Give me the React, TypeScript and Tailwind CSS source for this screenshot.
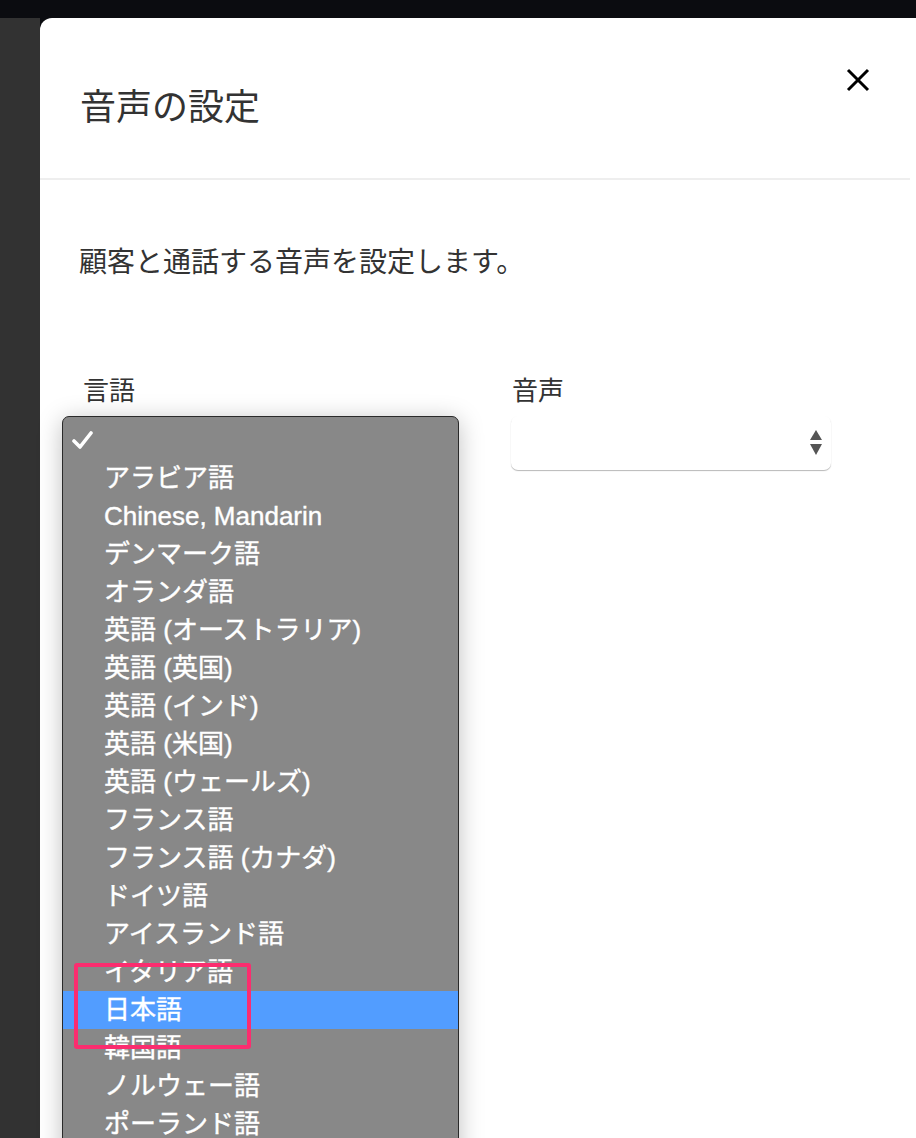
import React from "react";

const items = [
  "アラビア語",
  "Chinese, Mandarin",
  "デンマーク語",
  "オランダ語",
  "英語 (オーストラリア)",
  "英語 (英国)",
  "英語 (インド)",
  "英語 (米国)",
  "英語 (ウェールズ)",
  "フランス語",
  "フランス語 (カナダ)",
  "ドイツ語",
  "アイスランド語",
  "イタリア語",
  "日本語",
  "韓国語",
  "ノルウェー語",
  "ポーランド語",
];

const font = {
  fontFamily: '"Liberation Sans", "Noto Sans CJK JP", sans-serif',
};

export default function App() {
  return (
    <div
      className="h-[1138px] overflow-hidden bg-[#0b0c10] flex flex-col"
      style={font}
    >
      <div className="h-[18px] shrink-0" />
      <div className="flex flex-1">
        <div className="w-[40px] shrink-0 bg-[#323232]" />
        <div className="flex-1 bg-white rounded-tl-[12px] flex flex-col">
          {/* header */}
          <div className="h-[162px] mr-[6px] border-b-2 border-[#eeeeee] flex justify-between pl-[40px] pr-[40px]">
            <h1 className="mt-[70px] text-[36px] leading-[40px] text-[#333333]">
              音声の設定
            </h1>
            <button className="mt-[50px] w-[24px] h-[24px] text-black">
              <svg viewBox="0 0 24 24" width="24" height="24">
                <path
                  d="M2 2 L22 22 M22 2 L2 22"
                  stroke="currentColor"
                  strokeWidth="3"
                  fill="none"
                />
              </svg>
            </button>
          </div>
          {/* body */}
          <div className="flex flex-col">
            <p className="mt-[65px] pl-[39px] text-[28px] leading-[36px] text-[#333333]">
              顧客と通話する音声を設定します。
            </p>
            <div className="mt-[94px] pl-[22px] flex gap-[52px]">
              {/* language */}
              <div className="w-[397px] flex flex-col">
                <label className="pl-[21px] text-[26px] leading-[32px] text-[#333333]">
                  言語
                </label>
                <div className="relative mt-[9px] h-[900px] bg-[#888888] border border-[#2a2a2a] rounded-[7px] shadow-[0_4px_24px_rgba(0,0,0,0.25)] pt-[4px] text-white text-[26px] leading-[38px] [-webkit-text-stroke:0.4px_white]">
                  <div className="h-[38px] pl-[9px] flex items-center">
                    <svg width="22" height="20" viewBox="0 0 22 20">
                      <path
                        d="M2 11 L8 17 L19 3"
                        stroke="white"
                        strokeWidth="3.6"
                        strokeLinecap="round"
                        strokeLinejoin="round"
                        fill="none"
                      />
                    </svg>
                  </div>
                  {items.map((it) => (
                    <div
                      key={it}
                      className={
                        it === "日本語"
                          ? "h-[38px] pl-[41px] bg-[#529dff] whitespace-nowrap"
                          : "h-[38px] pl-[41px] whitespace-nowrap"
                      }
                    >
                      {it}
                    </div>
                  ))}
                  <div className="absolute left-[11px] top-[546px] w-[177px] h-[86px] border-[4px] border-[#fb2d6f] rounded-[3px]" />
                </div>
              </div>
              {/* voice */}
              <div className="w-[320px] flex flex-col">
                <label className="pl-[1px] text-[26px] leading-[32px] text-[#333333]">
                  音声
                </label>
                <div className="mt-[9px] h-[54px] rounded-[7px] bg-white shadow-[0_1px_1px_rgba(0,0,0,0.28)] flex items-center justify-end pr-[8px]">
                  <svg width="14" height="26" viewBox="0 0 14 26">
                    <path d="M7 0 L13 10 L1 10 Z" fill="#555555" />
                    <path d="M1 14 L13 14 L7 25 Z" fill="#555555" />
                  </svg>
                </div>
              </div>
            </div>
          </div>
        </div>
      </div>
    </div>
  );
}
